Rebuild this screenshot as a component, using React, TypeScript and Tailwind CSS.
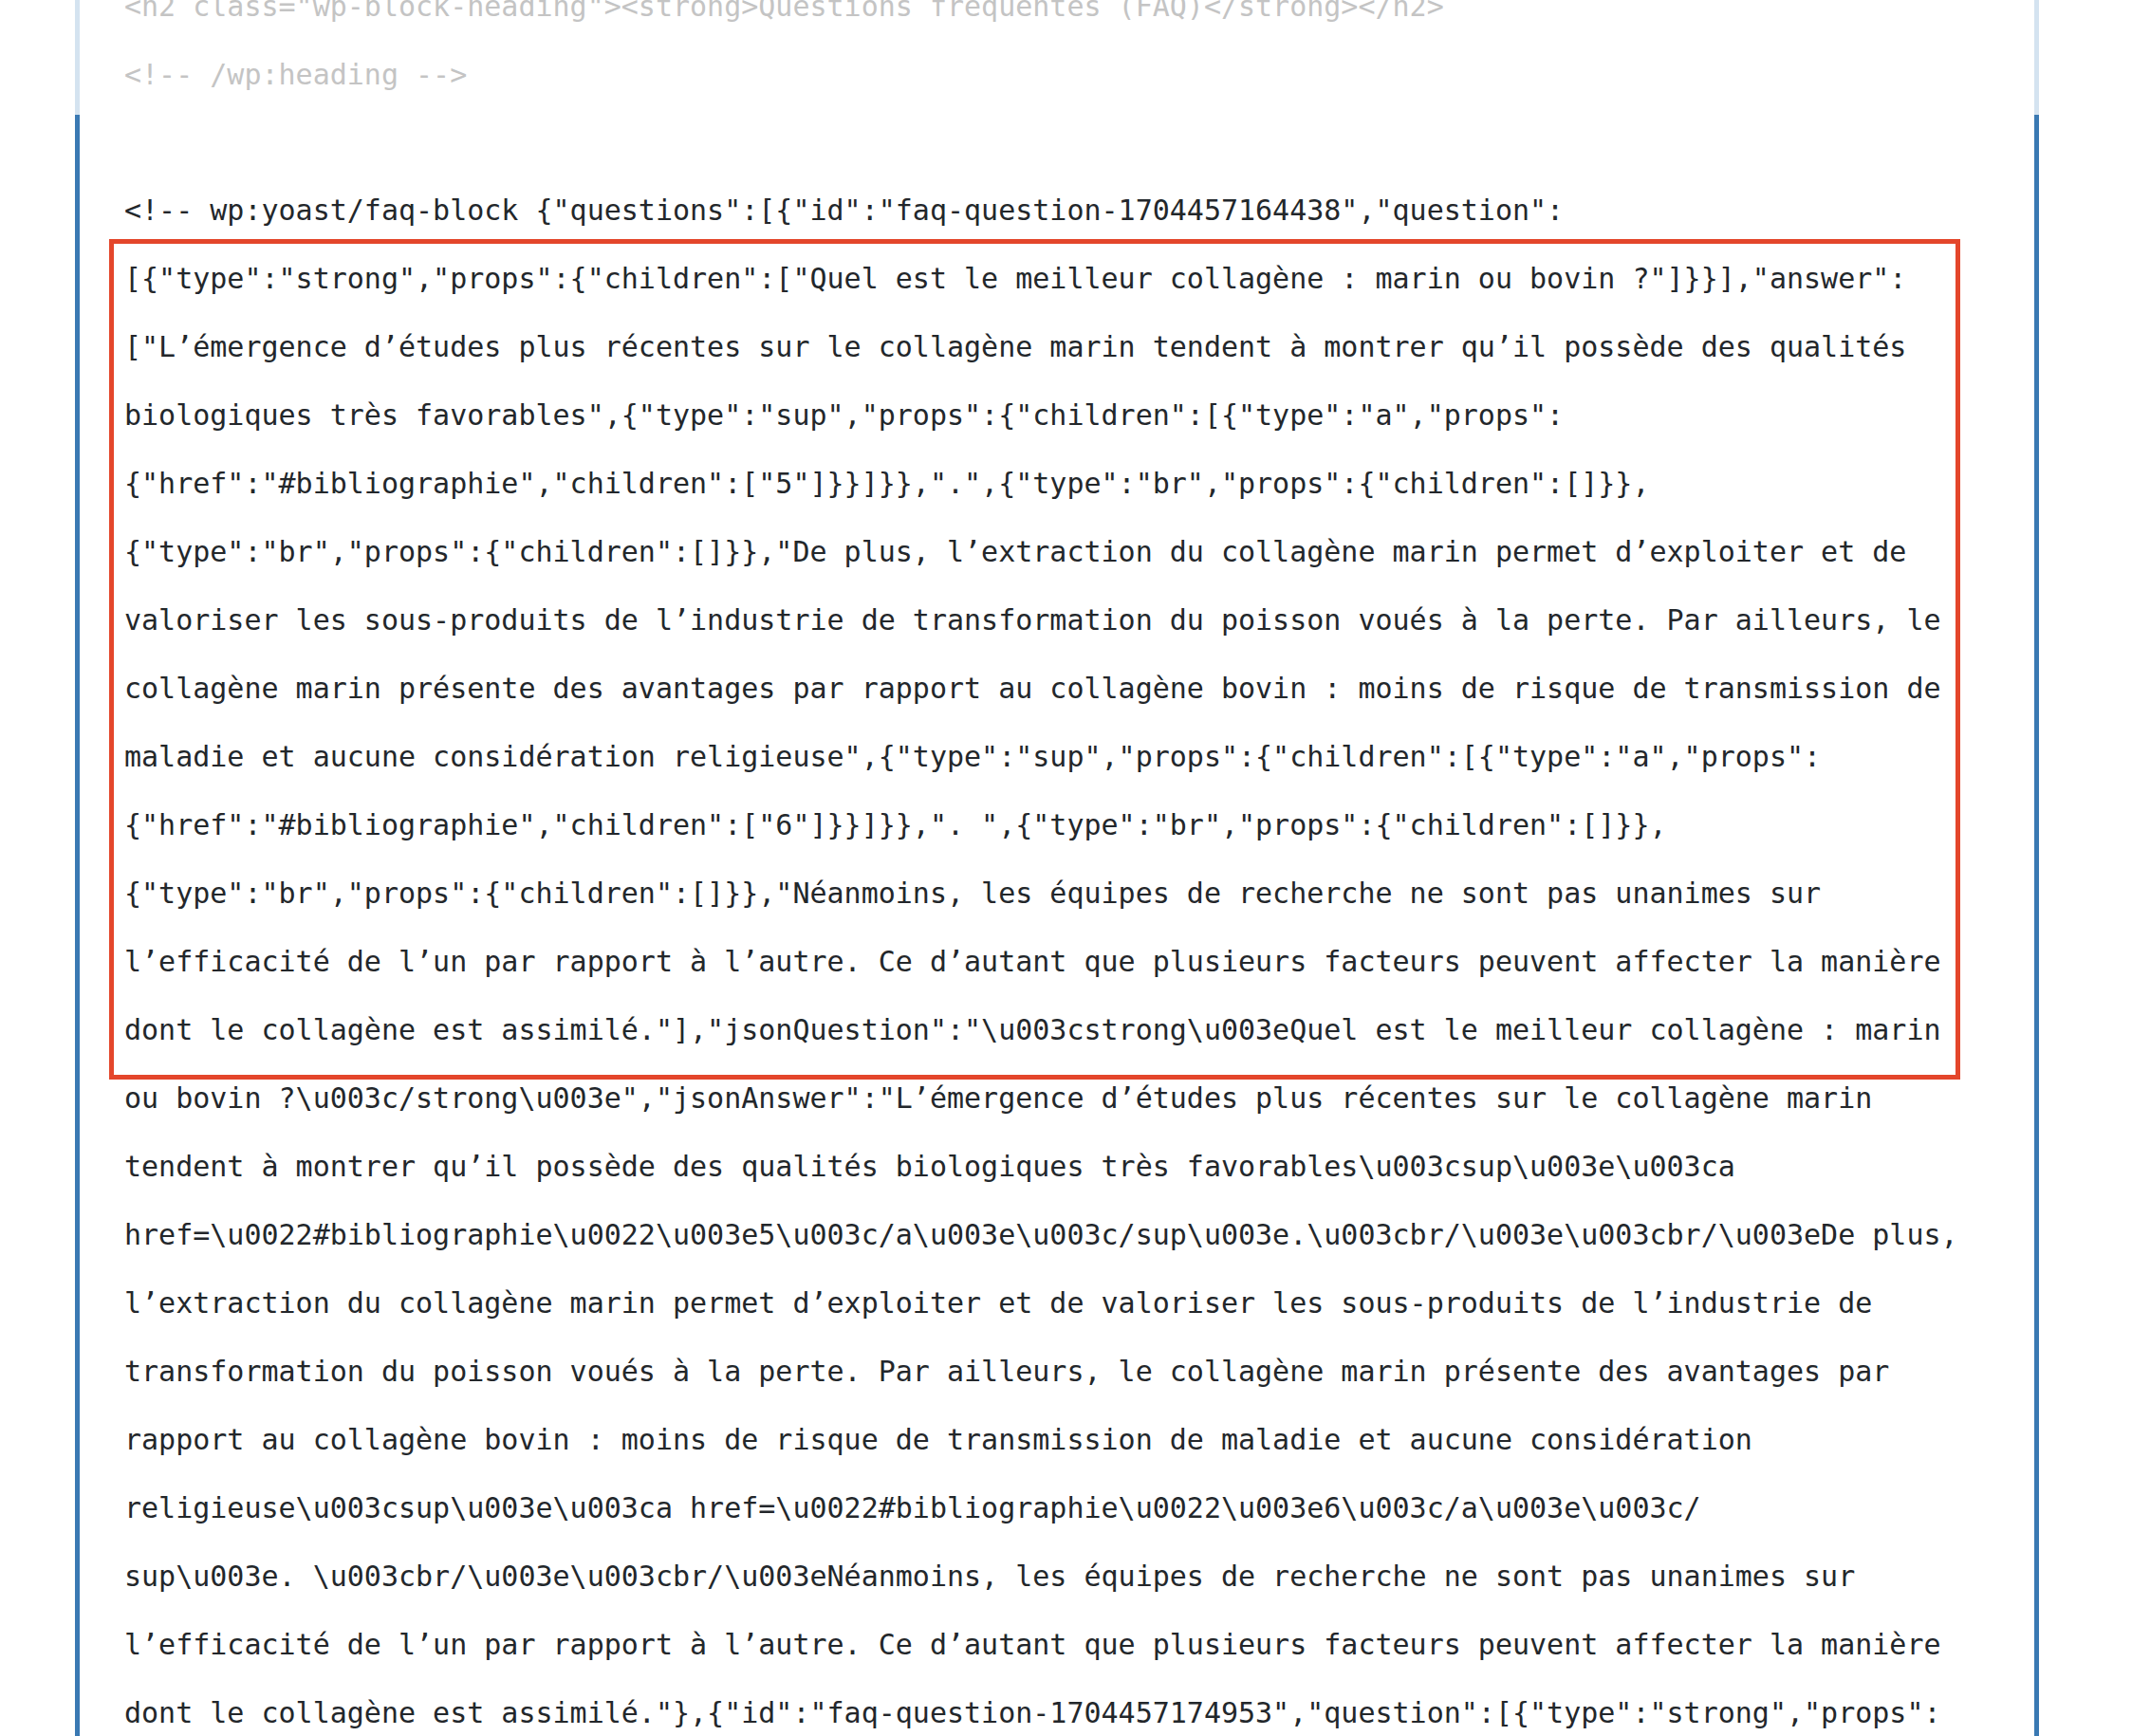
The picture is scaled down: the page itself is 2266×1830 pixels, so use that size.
import React from 'react';

// Lines are laid out exactly as the code editor wrapped them.
const fadedLines: string[] = [
  '<h2 class="wp-block-heading"><strong>Questions fréquentes (FAQ)</strong></h2>',
  '<!-- /wp:heading -->',
];

const blockLines: string[] = [
  '<!-- wp:yoast/faq-block {"questions":[{"id":"faq-question-1704457164438","question":',
  '[{"type":"strong","props":{"children":["Quel est le meilleur collagène : marin ou bovin ?"]}}],"answer":',
  '["L’émergence d’études plus récentes sur le collagène marin tendent à montrer qu’il possède des qualités',
  'biologiques très favorables",{"type":"sup","props":{"children":[{"type":"a","props":',
  '{"href":"#bibliographie","children":["5"]}}]}},".",{"type":"br","props":{"children":[]}},',
  '{"type":"br","props":{"children":[]}},"De plus, l’extraction du collagène marin permet d’exploiter et de',
  'valoriser les sous-produits de l’industrie de transformation du poisson voués à la perte. Par ailleurs, le',
  'collagène marin présente des avantages par rapport au collagène bovin : moins de risque de transmission de',
  'maladie et aucune considération religieuse",{"type":"sup","props":{"children":[{"type":"a","props":',
  '{"href":"#bibliographie","children":["6"]}}]}},". ",{"type":"br","props":{"children":[]}},',
  '{"type":"br","props":{"children":[]}},"Néanmoins, les équipes de recherche ne sont pas unanimes sur',
  'l’efficacité de l’un par rapport à l’autre. Ce d’autant que plusieurs facteurs peuvent affecter la manière',
  'dont le collagène est assimilé."],"jsonQuestion":"\\u003cstrong\\u003eQuel est le meilleur collagène : marin',
  'ou bovin ?\\u003c/strong\\u003e","jsonAnswer":"L’émergence d’études plus récentes sur le collagène marin',
  'tendent à montrer qu’il possède des qualités biologiques très favorables\\u003csup\\u003e\\u003ca',
  'href=\\u0022#bibliographie\\u0022\\u003e5\\u003c/a\\u003e\\u003c/sup\\u003e.\\u003cbr/\\u003e\\u003cbr/\\u003eDe plus,',
  'l’extraction du collagène marin permet d’exploiter et de valoriser les sous-produits de l’industrie de',
  'transformation du poisson voués à la perte. Par ailleurs, le collagène marin présente des avantages par',
  'rapport au collagène bovin : moins de risque de transmission de maladie et aucune considération',
  'religieuse\\u003csup\\u003e\\u003ca href=\\u0022#bibliographie\\u0022\\u003e6\\u003c/a\\u003e\\u003c/',
  'sup\\u003e. \\u003cbr/\\u003e\\u003cbr/\\u003eNéanmoins, les équipes de recherche ne sont pas unanimes sur',
  'l’efficacité de l’un par rapport à l’autre. Ce d’autant que plusieurs facteurs peuvent affecter la manière',
  'dont le collagène est assimilé."},{"id":"faq-question-1704457174953","question":[{"type":"strong","props":',
];

const mono = "font-['DejaVu_Sans_Mono','Liberation_Mono',monospace] text-[30px] leading-[72px] whitespace-pre";

export default function App() {
  return (
    <div className="h-[1830px] w-full overflow-hidden bg-white">
      <div className="ml-[79px] w-[2070px]">
        {/* previous block, unselected */}
        <div className="-mt-[29px] border-x-[5px] border-[#d4e3f0] pb-[6px] pl-[47px]">
          {fadedLines.map((line, i) => (
            <div key={i} className={`${mono} text-[#c4c4c4]`}>
              {line}
            </div>
          ))}
        </div>

        {/* selected block */}
        <div className="relative border-x-[5px] border-[#3a79b3] pt-[65px] pl-[47px]">
          {blockLines.map((line, i) => (
            <div key={i} className={`${mono} text-[#23272b]`}>
              {line}
            </div>
          ))}
          {/* red highlight drawn over the answer */}
          <div className="pointer-events-none absolute left-[31px] top-[131px] h-[886px] w-[1951px] border-[5px] border-[#e4462b]" />
        </div>
      </div>
    </div>
  );
}
